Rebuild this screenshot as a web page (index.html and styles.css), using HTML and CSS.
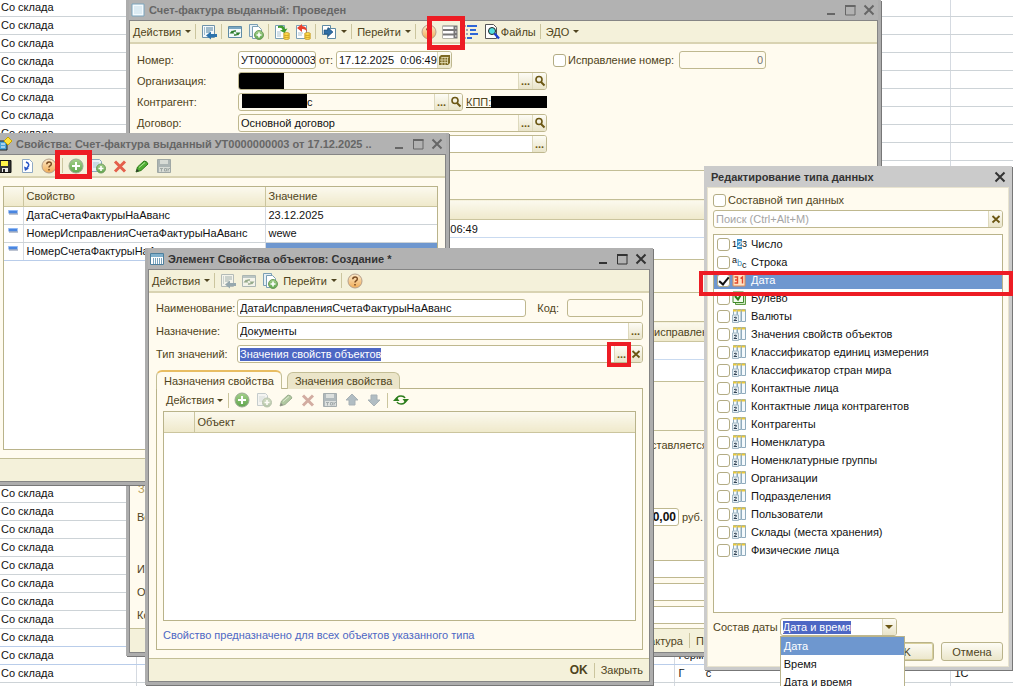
FILE: index.html
```html
<!DOCTYPE html>
<html lang="ru">
<head>
    <meta charset="UTF-8">
    <meta name="viewport" content="width=device-width, initial-scale=1.0">
    <link rel="stylesheet" href="styles.css">
    <title>Счет-фактура выданный</title>
</head>
<body>
    <!-- Набор иконок -->
    <svg class="sprite" aria-hidden="true">
        <linearGradient id="gGreen" x1="0" y1="0" x2="0" y2="1"><stop offset="0" stop-color="#a5d18c"/><stop offset="1" stop-color="#5fa54c"/></linearGradient>
        <linearGradient id="gOrange" x1="0" y1="0" x2="0" y2="1"><stop offset="0" stop-color="#fdebcb"/><stop offset="1" stop-color="#f0ab55"/></linearGradient>
        <symbol id="i-doc" viewBox="0 0 16 16"><path d="M2 2h12v12H2z" fill="#f4fafd" stroke="#7ba4bd"/><path d="M4 5h8M4 7h8M4 9h8M4 11h8" stroke="#c3dbe8"/></symbol>
        <symbol id="i-grid" viewBox="0 0 16 16"><path d="M1.500 2.500h13v11h-13z" fill="#fff" stroke="#4d7f9c"/><path d="M2 3h12v3H2z" fill="#7fb0cc"/><path d="M4.500 7v6M6.500 7v6M8.500 7v6M10.500 7v6M12.500 7v6" stroke="#7ba4bd"/></symbol>
        <symbol id="i-props" viewBox="0 0 16 16"><path d="M2 5h8v9H2z" fill="#4aa3d8" stroke="#222"/><path d="M4 8h4M4 11h4" stroke="#fff"/><path d="M11 1l4 4-4 4-4-4z" fill="#ffe23d" stroke="#c7a400"/></symbol>
        <symbol id="i-close-save" viewBox="0 0 16 16"><path d="M1.500 1.500h12v12h-12z" fill="#f3f8fb" stroke="#6f93aa"/><path d="M3 4h1M5 4h7M3 6h1M5 6h7M3 8h1M5 8h4M3 10h1" stroke="#4d7f9c"/><path d="M5 11.500l5-4v2.500h6v3h-6v2.500z" fill="#2c73ad"/></symbol>
        <symbol id="i-reread" viewBox="0 0 16 16"><path d="M1.500 2.500h13v11h-13z" fill="#f3f8fb" stroke="#5f8ba5"/><path d="M2 3h12v2H2z" fill="#7aa7c2"/><path d="M5 8.500q1-2 4-1.500M11 9.500q-1 2-4 1.500" fill="none" stroke="#2c7d2c" stroke-width="1.500"/><path d="M8.500 8.500h5l-2.500 3zM2.500 9.500h5L5 6.500z" fill="#2c7d2c"/></symbol>
        <symbol id="i-copy" viewBox="0 0 16 16"><path d="M1.500.5h8v12h-8z" fill="#e7f0f5" stroke="#7b9fb5"/><path d="M4.500 2.500h6l3 3v9h-9z" fill="#fff" stroke="#7b9fb5"/><circle cx="11" cy="11" r="4.500" fill="url(#gGreen)" stroke="#6f9c5c"/><path d="M11 8.500v5M8.500 11h5" stroke="#fff" stroke-width="1.600"/></symbol>
        <symbol id="i-post" viewBox="0 0 16 16"><path d="M1.500 1.500h9v13h-9z" fill="#fff" stroke="#7b9fb5"/><path d="M3 8h4M3 10h4M3 12h4" stroke="#a9c3d2"/><path d="M4 2q6-2 7 3l2.500-.5L10.500 9 6 6.500l2.500-.8Q8 3 4 4z" fill="#3f9a2e"/><g fill="#ffd84a" stroke="#b88d17" stroke-width=".7"><ellipse cx="12.500" cy="14" rx="3" ry="1.500"/><ellipse cx="12.500" cy="12" rx="3" ry="1.500"/><ellipse cx="12.500" cy="10" rx="3" ry="1.500"/></g></symbol>
        <symbol id="i-unpost" viewBox="0 0 16 16"><path d="M1.500 1.500h10v13h-10z" fill="#fff" stroke="#7b9fb5"/><path d="M3 9h5M3 11h4" stroke="#a9c3d2"/><path d="M2 4l5-4v2q5 0 5 6-1-3-5-3v3z" fill="#e8402c"/><g fill="#ffd84a" stroke="#b88d17" stroke-width=".7"><ellipse cx="12.500" cy="14" rx="3" ry="1.500"/><ellipse cx="12.500" cy="12" rx="3" ry="1.500"/><ellipse cx="12.500" cy="10" rx="3" ry="1.500"/></g></symbol>
        <symbol id="i-based" viewBox="0 0 16 16"><path d="M1.500 1.500h8v9h-8z" fill="#fff" stroke="#5f8ba5"/><path d="M6.500 4.500h8v10h-8z" fill="#fff" stroke="#5f8ba5"/><path d="M3 6h4V3.500l5 4.500-5 4.500V10H3z" fill="#2f6fa6" stroke="#1d4a73" stroke-width=".6"/></symbol>
        <symbol id="i-help" viewBox="0 0 16 16"><circle cx="8" cy="8" r="7" fill="url(#gOrange)" stroke="#b5a08c"/><path d="M5.800 6.300q0-2.300 2.300-2.300t2.200 2q0 1.200-1.300 1.900-1 .6-1 1.600" fill="none" stroke="#7a4a20" stroke-width="1.500"/><path d="M7.200 11h1.600v1.500H7.200z" fill="#7a4a20"/></symbol>
        <symbol id="i-table" viewBox="0 0 16 16"><path d="M.5 1.500h15v13H.5z" fill="#777"/><path d="M1 2.500h10.500V5H1zM1 7h10.500v2.500H1zM1 11.500h10.500V14H1z" fill="#fff"/><path d="M13 4h1.500M13 8h1.500M13 12h1.500" stroke="#fff"/></symbol>
        <symbol id="i-tree" viewBox="0 0 16 16"><path d="M4 2h10M7 6h6M7 10h8M4 14h5" stroke="#2f66d6" stroke-width="2"/><path d="M1 2h2M3 6h2M3 10h2M1 14h2" stroke="#88a" stroke-width="1.500"/></symbol>
        <symbol id="i-files" viewBox="0 0 16 16"><path d="M1.500.5h8l3 3v11h-11z" fill="#fff" stroke="#555"/><circle cx="8" cy="7" r="3.500" fill="#52e0e0" stroke="#222"/><path d="M10.500 9.500L15 14.500" stroke="#1c3fd0" stroke-width="2.400"/></symbol>
        <symbol id="i-floppy" viewBox="0 0 16 16"><path d="M1.500 2.500h12.500v12H1.500z" fill="#333" stroke="#111"/><path d="M4 3h7v5H4z" fill="#fff44a"/><path d="M5 10h6v4H5z" fill="#e8e8e8"/><path d="M6 11h2v3H6z" fill="#222"/></symbol>
        <symbol id="i-page" viewBox="0 0 16 16"><path d="M3.500 1.500h7l3 3v10h-10z" fill="#fff" stroke="#8fa9c4"/><path d="M7 4q5 2 1 6" fill="none" stroke="#2b57c8" stroke-width="1.500"/><path d="M5 8.500l1 4.500 4-2.500z" fill="#2b57c8"/></symbol>
        <symbol id="i-add" viewBox="0 0 16 16"><circle cx="8" cy="8" r="7" fill="url(#gGreen)" stroke="#9bab94"/><path d="M8 4v8M4 8h8" stroke="#fff" stroke-width="2"/></symbol>
        <symbol id="i-adddoc" viewBox="0 0 16 16"><path d="M1.500 1.500h8l2 2v10h-10z" fill="#e9f1f6" stroke="#8aa9bc"/><path d="M3 5h6M3 7h5M3 9h4" stroke="#a9c3d2"/><circle cx="11" cy="10.500" r="4.500" fill="url(#gGreen)" stroke="#6f9c5c"/><path d="M11 8v5M8.500 10.500h5" stroke="#fff" stroke-width="1.600"/></symbol>
        <symbol id="i-del" viewBox="0 0 16 16"><path d="M3 3.500l10 10M13 3.500l-10 10" stroke="#e4604c" stroke-width="3"/></symbol>
        <symbol id="i-edit" viewBox="0 0 16 16"><path d="M2 14l1.500-5L10 3q3 0 4 3l-7 6.500z" fill="#4fae32" stroke="#2f7a1c"/><path d="M2 14l1-3 2 2z" fill="#333"/><path d="M5 9.500l6-5" stroke="#b7e6a0"/></symbol>
        <symbol id="i-tok" viewBox="0 0 16 16"><path d="M1.500 1.500h13v13h-13z" fill="#5f87a8" stroke="#4f7189"/><path d="M4 2h8v4H4zM3 9h11v5H3z" fill="#b9ccd9"/><path d="M4 10.500h3M5.500 10.500v3M8.500 10.500h2v2.500h-2zM12 10v3.500M14 10l-2 2" stroke="#4f7189" fill="none"/></symbol>
        <symbol id="i-up" viewBox="0 0 16 16"><path d="M8 2l6 6h-3v5H5V8H2z" fill="#5f8fb8" stroke="#51799b"/></symbol>
        <symbol id="i-down" viewBox="0 0 16 16"><path d="M8 14l6-6h-3V3H5v5H2z" fill="#5f8fb8" stroke="#51799b"/></symbol>
        <symbol id="i-refresh" viewBox="0 0 16 16"><path d="M3.500 8q0-4 4.500-4 3 0 4 2M12.500 8q0 4-4.500 4-3 0-4-2" fill="none" stroke="#2c7d1c" stroke-width="1.600"/><path d="M9.500 7H16l-3.500 4zM0 9h6.500L3.500 5z" fill="#2c7d1c"/></symbol>
        <symbol id="i-lens" viewBox="0 0 12 12"><circle cx="5" cy="4.500" r="3" fill="none" stroke="#6b5714" stroke-width="1.600"/><path d="M7 7l3.500 3.500" stroke="#6b5714" stroke-width="2"/></symbol>
        <symbol id="i-cal" viewBox="0 0 12 12"><path d="M3 1h9v8l-2 2H1V3z" fill="#7d6a25"/><path d="M3.500 3.500h7M2 6h8M2 8.500h8M4 3v8M7 3v8M9.500 3v7" stroke="#e6dfb8" stroke-width=".8"/></symbol>
        <symbol id="i-x" viewBox="0 0 12 12"><path d="M2.500 3l7 6.500M9.500 3l-7 6.500" stroke="#6b5714" stroke-width="1.800"/></symbol>
        <symbol id="i-min" viewBox="0 0 12 12"><path d="M2 10h8" stroke="currentColor" stroke-width="2"/></symbol>
        <symbol id="i-max" viewBox="0 0 12 12"><path d="M1.500 1.500h9.500v9.500H1.500z" fill="none" stroke="currentColor"/><path d="M1 2h10.500" stroke="currentColor" stroke-width="2"/></symbol>
        <symbol id="i-close" viewBox="0 0 12 12"><path d="M1.500 1.500l9 9M10.500 1.500l-9 9" stroke="currentColor" stroke-width="2"/></symbol>
        <symbol id="i-row" viewBox="0 0 10 6"><path d="M.5 1h9v3.500h-9z" fill="#4a86e0"/><path d="M1 1.500h8" stroke="#8db7f5"/><path d="M1 5h9" stroke="#7d8aa5"/></symbol>
        <symbol id="i-date" viewBox="0 0 14 14"><path d="M1 1h12v12H1z" fill="#ffe3c4" stroke="#e08b55"/><path d="M2.500 4h3v6h-3M3 7h2.500M8.500 5.500L10.500 4v6.500" fill="none" stroke="#e0482c" stroke-width="1.400"/></symbol>
        <symbol id="i-bool" viewBox="0 0 14 14"><path d="M3.500 3.500h10v10h-10z" fill="#cfe8c2" stroke="#5d9a45"/><path d="M1 1h10.500v10.500H1z" fill="#f4fbef" stroke="#3f8a2a"/><path d="M3 5l3 3.500L10 2" fill="none" stroke="#2c7d1c" stroke-width="2"/></symbol>
        <symbol id="i-ref" viewBox="0 0 14 14"><path d="M1.500.5h3.500v8H1.500zM5.500.5h3.500v12H5.500zM9.500.5h4v12h-4z" fill="#f4f9fc" stroke="#8fabbd"/><path d="M1 1.500h13" stroke="#ecc93a" stroke-width="2" stroke-dasharray="3.500 .8"/><path d="M.5 6h6v7.500h-6z" fill="#e6eef3" stroke="#a3b8c5"/><path d="M2 8.500q3-1 2.500.5L2 11.500h3" fill="none" stroke="#345"/></symbol>
    </svg>

    <main class="desktop">
        <!-- Журнал документов на заднем плане -->
        <table class="journal">
            <colgroup>
                <col class="j1"><col class="j2"><col class="j3"><col class="j4"><col class="j5"><col class="j6"><col class="j7"><col>
            </colgroup>
            <tbody id="journalRows"></tbody>
        </table>

        <!-- Счет-фактура -->
        <section class="window window--invoice">
            <header class="window__title">
                <svg class="icon"><use href="#i-doc"/></svg>
                <h2>Счет-фактура выданный: Проведен</h2>
                <button aria-label="Свернуть"><svg><use href="#i-min"/></svg></button>
                <button aria-label="Развернуть"><svg><use href="#i-max"/></svg></button>
                <button aria-label="Закрыть"><svg><use href="#i-close"/></svg></button>
            </header>
            <div class="window__body">
                <div class="toolbar toolbar--tight">
                    <button class="menu">Действия</button>
                    <i class="sep"></i>
                    <button aria-label="Записать и закрыть"><svg class="icon"><use href="#i-close-save"/></svg></button>
                    <i class="sep"></i>
                    <button aria-label="Перечитать"><svg class="icon"><use href="#i-reread"/></svg></button>
                    <button aria-label="Скопировать"><svg class="icon"><use href="#i-copy"/></svg></button>
                    <i class="sep"></i>
                    <button aria-label="Провести"><svg class="icon"><use href="#i-post"/></svg></button>
                    <button aria-label="Отмена проведения"><svg class="icon"><use href="#i-unpost"/></svg></button>
                    <i class="sep"></i>
                    <button class="menu" aria-label="На основании"><svg class="icon"><use href="#i-based"/></svg></button>
                    <i class="sep"></i>
                    <button class="menu">Перейти</button>
                    <i class="sep"></i>
                    <button aria-label="Справка"><svg class="icon"><use href="#i-help"/></svg></button>
                    <button aria-label="Свойства"><svg class="icon"><use href="#i-table"/></svg></button>
                    <button aria-label="Структура"><svg class="icon"><use href="#i-tree"/></svg></button>
                    <button><svg class="icon"><use href="#i-files"/></svg>Файлы</button>
                    <i class="sep"></i>
                    <button class="menu">ЭДО</button>
                </div>
                <div class="form">
                    <div class="form__row">
                        <label class="form__label" for="num">Номер:</label>
                        <div class="field field--num"><input id="num" value="УТ0000000003"></div>
                        <label for="date">от:</label>
                        <div class="field field--date"><input id="date" value="17.12.2025  0:06:49"><button aria-label="Календарь"><svg><use href="#i-cal"/></svg></button></div>
                        <label class="check check--fix"><input type="checkbox">Исправление номер:</label>
                        <div class="field field--fix field--cream"><input aria-label="Номер исправления" value="0"></div>
                    </div>
                    <div class="form__row">
                        <label class="form__label" for="org">Организация:</label>
                        <div class="field field--long field--cream"><span class="redacted redacted--org"></span><input id="org"><button aria-label="Выбрать">...</button><button aria-label="Открыть"><svg><use href="#i-lens"/></svg></button></div>
                    </div>
                    <div class="form__row">
                        <label class="form__label" for="agent">Контрагент:</label>
                        <div class="field field--agent field--cream"><span class="redacted redacted--agent"></span><input id="agent" value="с"><button aria-label="Выбрать">...</button><button aria-label="Открыть"><svg><use href="#i-lens"/></svg></button></div>
                        <a class="kpp" href="#">КПП:<span class="redacted redacted--kpp"></span></a>
                    </div>
                    <div class="form__row">
                        <label class="form__label" for="contract">Договор:</label>
                        <div class="field field--long field--cream"><input id="contract" value="Основной договор"><button aria-label="Выбрать">...</button><button aria-label="Открыть"><svg><use href="#i-lens"/></svg></button></div>
                    </div>
                    <div class="form__row">
                        <span class="form__label"></span>
                        <div class="field field--long"><input aria-label="Документ"><button aria-label="Выбрать">...</button></div>
                    </div>
                </div>
                <div class="pane pane--base">
                    <table class="grid grid--sheet">
                        <thead><tr><th></th><th></th></tr></thead>
                        <tbody><tr><td></td><td>17.12.2025 0:06:49</td></tr></tbody>
                    </table>
                </div>
                <div class="pane pane--fix">
                    <table class="grid grid--sheet grid--fix">
                        <thead><tr><th></th><th>исправления</th></tr></thead>
                        <tbody><tr><td></td><td></td></tr></tbody>
                    </table>
                </div>
                <div class="pane pane--total">
                    <p class="issued">ставляется</p>
                    <p class="caption">За</p>
                    <div class="form__row">
                        <label class="form__label" for="total">Всего</label>
                        <div class="field field--total"><input id="total" value="0,00"></div>
                        <span>руб.</span>
                    </div>
                </div>
                <div class="signs">
                    <div class="form__row"><label class="form__label" for="s1">Исп</label><div class="field"><input id="s1"></div></div>
                    <div class="form__row"><label class="form__label" for="s2">Отв</label><div class="field"><input id="s2"></div></div>
                    <div class="form__row"><label class="form__label" for="s3">Ком</label><div class="field"><input id="s3"></div></div>
                </div>
                <div class="footer footer--invoice">
                    <button>Счет-фактура</button>
                    <i class="sep"></i>
                    <button>Печать</button>
                </div>
            </div>
        </section>

        <!-- Свойства документа -->
        <section class="window window--props">
            <header class="window__title">
                <svg class="icon"><use href="#i-props"/></svg>
                <h2>Свойства: Счет-фактура выданный УТ0000000003 от 17.12.2025 ..</h2>
                <button aria-label="Свернуть"><svg><use href="#i-min"/></svg></button>
                <button aria-label="Развернуть"><svg><use href="#i-max"/></svg></button>
                <button aria-label="Закрыть"><svg><use href="#i-close"/></svg></button>
            </header>
            <div class="window__body">
                <div class="toolbar toolbar--flush">
                    <button aria-label="Записать"><svg class="icon"><use href="#i-floppy"/></svg></button>
                    <button aria-label="Обновить"><svg class="icon"><use href="#i-page"/></svg></button>
                    <button aria-label="Справка"><svg class="icon"><use href="#i-help"/></svg></button>
                    <i class="sep"></i>
                    <button aria-label="Добавить"><svg class="icon"><use href="#i-add"/></svg></button>
                    <button aria-label="Скопировать"><svg class="icon"><use href="#i-adddoc"/></svg></button>
                    <button aria-label="Удалить"><svg class="icon"><use href="#i-del"/></svg></button>
                    <button aria-label="Изменить"><svg class="icon"><use href="#i-edit"/></svg></button>
                    <button aria-label="Закончить редактирование" disabled><svg class="icon"><use href="#i-tok"/></svg></button>
                </div>
                <div class="grid-box grid-box--props">
                    <table class="grid grid--props">
                        <colgroup><col class="c-mark"><col class="c-name"><col></colgroup>
                        <thead><tr><th></th><th>Свойство</th><th>Значение</th></tr></thead>
                        <tbody>
                            <tr><td><svg><use href="#i-row"/></svg></td><td>ДатаСчетаФактурыНаАванс</td><td>23.12.2025</td></tr>
                            <tr><td><svg><use href="#i-row"/></svg></td><td>НомерИсправленияСчетаФактурыНаАванс</td><td>wewe</td></tr>
                            <tr class="current"><td><svg><use href="#i-row"/></svg></td><td>НомерСчетаФактурыНаАванс</td><td class="selected"></td></tr>
                        </tbody>
                    </table>
                </div>
                <div class="footer"></div>
            </div>
        </section>

        <!-- Создание свойства -->
        <section class="window window--element window--active">
            <header class="window__title">
                <svg class="icon"><use href="#i-grid"/></svg>
                <h2>Элемент Свойства объектов: Создание *</h2>
                <button aria-label="Свернуть"><svg><use href="#i-min"/></svg></button>
                <button aria-label="Развернуть"><svg><use href="#i-max"/></svg></button>
                <button aria-label="Закрыть"><svg><use href="#i-close"/></svg></button>
            </header>
            <div class="window__body">
                <div class="toolbar toolbar--tight">
                    <button class="menu">Действия</button>
                    <i class="sep"></i>
                    <button aria-label="Записать и закрыть" disabled><svg class="icon"><use href="#i-close-save"/></svg></button>
                    <button aria-label="Перечитать" disabled><svg class="icon"><use href="#i-reread"/></svg></button>
                    <button aria-label="Скопировать"><svg class="icon"><use href="#i-copy"/></svg></button>
                    <button class="menu">Перейти</button>
                    <i class="sep"></i>
                    <button aria-label="Справка"><svg class="icon"><use href="#i-help"/></svg></button>
                </div>
                <div class="form form--element">
                    <div class="form__row">
                        <label class="form__label" for="name">Наименование:</label>
                        <div class="field field--grow"><input id="name" value="ДатаИсправленияСчетаФактурыНаАванс"></div>
                        <label class="code" for="code">Код:</label>
                        <div class="field field--code field--cream"><input id="code"></div>
                    </div>
                    <div class="form__row">
                        <label class="form__label" for="target">Назначение:</label>
                        <div class="field field--grow"><input id="target" value="Документы"><button aria-label="Выбрать">...</button></div>
                    </div>
                    <div class="form__row">
                        <label class="form__label" for="type">Тип значений:</label>
                        <div class="field field--grow field--marked"><input id="type" value="Значения свойств объектов"><button aria-label="Выбрать тип">...</button><button aria-label="Очистить"><svg><use href="#i-x"/></svg></button></div>
                    </div>
                </div>
                <div class="tabs" role="tablist">
                    <button class="tab tab--active" role="tab" aria-selected="true">Назначения свойства</button>
                    <button class="tab" role="tab" aria-selected="false">Значения свойства</button>
                </div>
                <div class="tab-panel" role="tabpanel">
                    <div class="toolbar toolbar--plain">
                        <button class="menu">Действия</button>
                        <i class="sep"></i>
                        <button aria-label="Добавить"><svg class="icon"><use href="#i-add"/></svg></button>
                        <button aria-label="Скопировать" disabled><svg class="icon"><use href="#i-adddoc"/></svg></button>
                        <button aria-label="Изменить" disabled><svg class="icon"><use href="#i-edit"/></svg></button>
                        <button aria-label="Удалить" disabled><svg class="icon"><use href="#i-del"/></svg></button>
                        <button aria-label="Закончить редактирование" disabled><svg class="icon"><use href="#i-tok"/></svg></button>
                        <button aria-label="Вверх" disabled><svg class="icon"><use href="#i-up"/></svg></button>
                        <button aria-label="Вниз" disabled><svg class="icon"><use href="#i-down"/></svg></button>
                        <i class="sep"></i>
                        <button aria-label="Обновить"><svg class="icon"><use href="#i-refresh"/></svg></button>
                    </div>
                    <div class="grid-box">
                        <table class="grid grid--objects">
                            <thead><tr><th></th><th>Объект</th></tr></thead>
                        </table>
                    </div>
                    <p class="hint">Свойство предназначено для всех объектов указанного типа</p>
                </div>
                <div class="footer">
                    <button class="bold">OK</button>
                    <i class="sep"></i>
                    <button>Закрыть</button>
                </div>
            </div>
        </section>

        <!-- Выбор типа данных -->
        <section class="window window--types window--active">
            <header class="window__title">
                <h2>Редактирование типа данных</h2>
                <button aria-label="Закрыть"><svg><use href="#i-close"/></svg></button>
            </header>
            <div class="window__body">
                <label class="check"><input type="checkbox">Составной тип данных</label>
                <div class="field field--search"><input placeholder="Поиск (Ctrl+Alt+M)" aria-label="Поиск"><button aria-label="Очистить"><svg><use href="#i-x"/></svg></button></div>
                <ul class="types">
                    <li><label><input type="checkbox"><span class="t-num">1<b>2</b>3</span>Число</label></li>
                    <li><label><input type="checkbox"><span class="t-str"><i>a</i><b>b</b><u>c</u></span>Строка</label></li>
                    <li class="selected"><label><input type="checkbox" checked><svg><use href="#i-date"/></svg>Дата</label></li>
                    <li><label><input type="checkbox"><svg><use href="#i-bool"/></svg>Булево</label></li>
                    <li><label><input type="checkbox"><svg><use href="#i-ref"/></svg>Валюты</label></li>
                    <li><label><input type="checkbox"><svg><use href="#i-ref"/></svg>Значения свойств объектов</label></li>
                    <li><label><input type="checkbox"><svg><use href="#i-ref"/></svg>Классификатор единиц измерения</label></li>
                    <li><label><input type="checkbox"><svg><use href="#i-ref"/></svg>Классификатор стран мира</label></li>
                    <li><label><input type="checkbox"><svg><use href="#i-ref"/></svg>Контактные лица</label></li>
                    <li><label><input type="checkbox"><svg><use href="#i-ref"/></svg>Контактные лица контрагентов</label></li>
                    <li><label><input type="checkbox"><svg><use href="#i-ref"/></svg>Контрагенты</label></li>
                    <li><label><input type="checkbox"><svg><use href="#i-ref"/></svg>Номенклатура</label></li>
                    <li><label><input type="checkbox"><svg><use href="#i-ref"/></svg>Номенклатурные группы</label></li>
                    <li><label><input type="checkbox"><svg><use href="#i-ref"/></svg>Организации</label></li>
                    <li><label><input type="checkbox"><svg><use href="#i-ref"/></svg>Подразделения</label></li>
                    <li><label><input type="checkbox"><svg><use href="#i-ref"/></svg>Пользователи</label></li>
                    <li><label><input type="checkbox"><svg><use href="#i-ref"/></svg>Склады (места хранения)</label></li>
                    <li><label><input type="checkbox"><svg><use href="#i-ref"/></svg>Физические лица</label></li>
                </ul>
                <div class="date-parts">
                    <label for="parts">Состав даты</label>
                    <div class="combo">
                        <div class="field field--marked">
                            <select id="parts"><option>Дата и время</option></select>
                            <span class="combo__arrow"></span>
                        </div>
                        <ul class="combo__list">
                            <li class="selected">Дата</li>
                            <li>Время</li>
                            <li>Дата и время</li>
                        </ul>
                    </div>
                </div>
                <div class="actions">
                    <button class="btn btn--default">OK</button>
                    <button class="btn">Отмена</button>
                </div>
            </div>
        </section>

        <!-- Красные рамки -->
        <div class="mark mark--properties"></div>
        <div class="mark mark--add"></div>
        <div class="mark mark--choose"></div>
        <div class="mark mark--date"></div>
    </main>

    <script>
        const journalRows = document.getElementById('journalRows');
        const extra = {
            36: ['', '', '', '', '', 'Герм', ''],
            37: ['', '', '', '', '', 'Г       с', '1С']
        };

        for (let i = 0; i < 39; i++) {
            const tr = document.createElement('tr');
            const first = i < 38 ? 'Со склада' : '';
            const cells = [first].concat(extra[i] || ['', '', '', '', '', '', '']);
            cells.forEach((text) => {
                const td = document.createElement('td');
                td.textContent = text;
                tr.appendChild(td);
            });
            if (i === 35 || i === 36) {
                tr.className = 'current';
            }
            journalRows.appendChild(tr);
        }
    </script>
</body>
</html>
```
FILE: styles.css
```css
* {
    box-sizing: border-box;
}

body {
    margin: 0;
    background: #fff;
    color: #4f4420;
    font-family: "Liberation Sans", Arial, sans-serif;
    font-size: 11px;
    line-height: 14px;
}

h2, p, ul {
    margin: 0;
    padding: 0;
}

ul {
    list-style: none;
}

button, input, select {
    margin: 0;
    padding: 0;
    border: none;
    background: none;
    color: inherit;
    font: inherit;
}

button {
    cursor: pointer;
}

svg {
    display: block;
    flex: none;
}

.sprite {
    position: absolute;
    width: 0;
    height: 0;
}

.icon {
    width: 16px;
    height: 16px;
}

.desktop {
    position: relative;
    height: 100vh;
    overflow: hidden;
    padding-right: 11px;
}

/* Журнал */
.journal {
    width: 100%;
    margin-top: -2px;
    table-layout: fixed;
    border-collapse: collapse;
    color: #111;
}

.journal td {
    height: 18px;
    padding: 0 0 0 4px;
    border-right: 1px solid #d5dae1;
    border-bottom: 1px solid #cdd3d7;
    white-space: pre;
    overflow: hidden;
}

.journal td:first-child {
    padding-left: 1px;
}

.journal td:last-child {
    border-right: none;
}

.journal .current td {
    border-bottom-color: #b9cdea;
}

.j1 { width: 136px; }
.j2 { width: 76px; }
.j3 { width: 47px; }
.j4 { width: 139px; }
.j5 { width: 138px; }
.j6 { width: 138px; }
.j7 { width: 276px; }

/* Окна */
.window {
    position: absolute;
    display: flex;
    flex-direction: column;
    border: 3px solid #adadad;
    border-top: 0;
    box-shadow: 1px 1px 0 #777;
    background: #fffbef;
}

.window--invoice {
    left: 126px;
    top: 0;
    width: 755px;
    height: 656px;
}

.window--props {
    left: -7px;
    top: 133px;
    width: 456px;
    height: 352px;
}

.window--element {
    left: 145px;
    top: 248px;
    width: 508px;
    height: 437px;
}

.window--types {
    left: 704px;
    top: 166px;
    width: 308px;
    height: 504px;
    border-color: #cbcbcb;
}

.window__title {
    display: flex;
    align-items: center;
    height: 21px;
    padding-left: 1px;
    background: #b2b2b2;
    color: #666;
}

.window--invoice .window__title {
    height: 20px;
}

.window__title h2 {
    flex: 1;
    padding-left: 3px;
    font-size: 11px;
    white-space: nowrap;
}

.window__title button {
    width: 19px;
}

.window__title button svg {
    width: 12px;
    height: 12px;
    margin: 0 auto;
}

.window--active .window__title {
    color: #333;
}

.window--types .window__title {
    background: #cbcbcb;
}

.window__body {
    flex: 1;
    display: flex;
    flex-direction: column;
    min-height: 0;
    border: 1px solid #858585;
}

.window--types .window__body {
    padding: 5px;
    border-color: #e8e3cf;
}

/* Панели инструментов */
.toolbar {
    display: flex;
    align-items: center;
    gap: 6px;
    height: 23px;
    padding: 0 3px;
    background: #f4f1da;
    border-bottom: 2px solid #d9d3b2;
}

.toolbar--tight {
    gap: 5px;
}

.toolbar--flush {
    padding: 0;
}

.toolbar--plain {
    height: 22px;
    background: none;
    border: none;
}

.toolbar button {
    display: flex;
    align-items: center;
    gap: 1px;
}

.toolbar button:disabled {
    filter: grayscale(50%);
    opacity: 0.55;
}

.menu::after {
    content: "";
    margin-left: 2px;
    border: 3px solid transparent;
    border-top-color: #4f4420;
    border-bottom: 0;
}

.toolbar--tight .menu::after {
    margin-left: 3px;
}

.sep {
    width: 1px;
    height: 15px;
    background: #cbc59e;
}

.toolbar .sep {
    margin: 0 -1px;
}

.toolbar--tight .sep {
    margin-right: 0;
}

/* Поля */
.form {
    display: flex;
    flex-direction: column;
    gap: 3px;
    padding: 7px 7px 0;
}

.form__row {
    display: flex;
    align-items: center;
    gap: 3px;
    height: 18px;
}

.form__label {
    width: 98px;
    flex: none;
}

.field {
    display: flex;
    align-items: stretch;
    height: 18px;
    border: 1px solid #bfb88f;
    border-radius: 3px;
    background: #fff;
    color: #111;
    overflow: hidden;
}

.field input {
    flex: 1;
    min-width: 0;
    padding: 0 2px;
    outline: none;
}

.field button {
    width: 14px;
    flex: none;
    display: flex;
    align-items: center;
    justify-content: center;
    border-left: 1px solid #ded9bd;
    background: linear-gradient(#fdfcf5, #e9e4c9);
    color: #6b5714;
    font-weight: bold;
}

.field button svg {
    width: 12px;
    height: 12px;
}

.field--cream {
    background: #fffbef;
}

.field--num { width: 78px; }
.field--date { width: 116px; }
.field--date input { white-space: pre; }
.field--fix { width: 87px; margin-left: 2px; }
.field--long { width: 309px; }
.field--agent { width: 225px; padding-left: 3px; }
.field--agent input { padding: 0; }
.field--grow { flex: 1; }
.field--code { width: 76px; }
.field--total { width: 441px; font-size: 12px; font-weight: bold; }

.field--num input, .field--date input {
    padding-right: 0;
}

.field--fix input, .field--total input {
    text-align: right;
    color: #777;
}

.field--total input {
    color: #111;
}

.field--marked {
    align-items: center;
    padding-left: 2px;
}

.field--marked input, .field--marked select {
    flex: none;
    field-sizing: content;
    margin-right: auto;
    padding: 0;
    background: #4d67c4;
    color: #fff;
    line-height: 13px;
    appearance: none;
}

.field--marked button {
    align-self: stretch;
}

.check {
    display: flex;
    align-items: center;
    gap: 2px;
}

.check--fix {
    margin-left: 98px;
}

input[type="checkbox"] {
    width: 13px;
    height: 13px;
    flex: none;
    appearance: none;
    border: 1px solid #b3ac84;
    border-radius: 3px;
    background: #fff;
}

input[type="checkbox"]:checked::after {
    content: "";
    display: block;
    width: 4px;
    height: 8px;
    margin: 0 auto;
    border: solid #111;
    border-width: 0 2px 2px 0;
    transform: rotate(40deg);
}

.redacted {
    background: #000;
    flex: none;
}

.redacted--org { width: 45px; }
.redacted--agent { width: 65px; height: 14px; }

.redacted--kpp {
    width: 56px;
    height: 12px;
}

.kpp {
    display: flex;
    align-items: center;
    color: inherit;
}

/* Таблицы */
.grid {
    width: 100%;
    table-layout: fixed;
    border-collapse: collapse;
    color: #111;
}

.grid th {
    height: 20px;
    padding: 0 3px;
    border-bottom: 1px solid #cbc59e;
    border-right: 1px solid #cbc59e;
    background: linear-gradient(#fbf9ee, #efe9cb);
    color: #4f4420;
    font-weight: normal;
    text-align: left;
}

.grid td {
    height: 18px;
    padding: 0 3px;
    border-right: 1px solid #d5dae1;
    border-bottom: 1px solid #cdd3d7;
    white-space: nowrap;
    overflow: hidden;
}

.grid tr > :last-child {
    border-right: none;
}

.grid td svg {
    width: 10px;
    height: 6px;
    margin: -6px auto 0;
}

.grid .current td {
    border-bottom-color: #b9cdea;
}

.selected, .grid td.selected {
    background: #6e97cf;
    color: #fff;
}

.grid-box {
    flex: 1;
    border: 1px solid #b9b38a;
    background: #fff;
}

.grid-box--props {
    margin: 8px 7px 8px 6px;
}

.c-mark { width: 19px; }
.c-name { width: 242px; }

.grid--props th {
    height: 19px;
}

.grid--objects th:first-child {
    width: 30px;
}

/* Нижняя часть счета-фактуры */
.pane {
    padding-top: 28px;
    border-top: 1px solid #c3be96;
}

.pane--base {
    margin-top: 17px;
    height: 122px;
}

.pane--fix {
    height: 138px;
}

.grid--sheet {
    height: 60px;
    background: #fff;
    border-top: 1px solid #c3be96;
    border-bottom: 1px solid #c3be96;
}

.grid--sheet::after {
    content: "";
    display: block;
    height: 21px;
}

.grid--sheet th:first-child {
    width: 250px;
}

.grid--sheet th, .grid--sheet td {
    border-right: none;
}

.grid--sheet td {
    border-bottom-color: #c9daf0;
}

.grid--fix th:first-child {
    width: 521px;
}

.pane--total {
    height: 130px;
    padding: 7px 7px 0;
}

.issued {
    padding-left: 514px;
}

.caption {
    padding: 30px 0 12px 1px;
    color: #b39a55;
}

.signs {
    display: flex;
    flex-direction: column;
    gap: 5px;
    padding: 0 7px 4px;
}

.signs .field {
    flex: 1;
}

.footer {
    display: flex;
    align-items: center;
    justify-content: flex-end;
    gap: 6px;
    height: 23px;
    padding: 0 6px;
    background: #f4f1da;
    border-top: 1px solid #c3be96;
}

.footer--invoice {
    flex: 1;
    padding-right: 145px;
}

.bold {
    font-size: 12px;
    font-weight: bold;
}

/* Форма свойства */
.form--element {
    gap: 5px;
    padding: 6px 6px 7px 7px;
}

.form--element .form__label {
    width: 78px;
}

.code {
    padding: 0 5px 0 8px;
}

.tabs {
    display: flex;
    align-items: flex-end;
    gap: 5px;
    margin: 0 6px -1px 7px;
}

.tab {
    z-index: 1;
    height: 17px;
    padding: 0 7px;
    border: 1px solid #c3be96;
    border-bottom: none;
    border-radius: 6px 6px 0 0;
    background: #ebe5c9;
}

.tab--active {
    height: 19px;
    border-top: 2px solid #e8bd63;
    background: #fffbef;
}

.tab-panel {
    flex: 1;
    display: flex;
    flex-direction: column;
    margin: 0 6px 8px 7px;
    padding: 0 6px;
    border: 1px solid #b9b38a;
}

.hint {
    padding: 7px 0;
    color: #4d67c4;
}

/* Редактор типа */
.field--search {
    flex: none;
    margin-top: 3px;
}

.field--search input::placeholder {
    color: #a5a5a5;
}

.types {
    flex: 1;
    margin: 6px 0 5px;
    border: 1px solid #b9b38a;
    background: #fff;
    color: #111;
}

.types li {
    height: 18px;
}

.types li.selected {
    color: #fff;
}

.types label {
    display: flex;
    align-items: center;
    gap: 2px;
    height: 18px;
    padding-left: 3px;
}

.types svg {
    width: 14px;
    height: 14px;
    margin-right: 3px;
}

.t-num, .t-str {
    width: 15px;
    margin-right: 2px;
    display: flex;
    font-size: 9px;
    line-height: 10px;
}

.t-num b {
    background: #3f8fc4;
    color: #fff;
    font-weight: normal;
}

.t-str i {
    font-style: normal;
}

.t-str b {
    padding-top: 3px;
    color: #3f8fc4;
    font-weight: normal;
}

.t-str u {
    padding-top: 5px;
    text-decoration: none;
}

.date-parts {
    display: flex;
    align-items: center;
    gap: 2px;
}

.combo {
    position: relative;
}

.combo .field {
    width: 117px;
}

.combo__arrow {
    width: 14px;
    align-self: stretch;
    display: flex;
    align-items: center;
    justify-content: center;
    border-left: 1px solid #ded9bd;
    background: linear-gradient(#fdfcf5, #e9e4c9);
}

.combo__arrow::after {
    content: "";
    border: 4px solid transparent;
    border-top-color: #6b5714;
    border-bottom: 0;
}

.combo__list {
    position: absolute;
    z-index: 2;
    top: 100%;
    left: 0;
    width: 125px;
    border: 1px solid #b9b38a;
    background: #fff;
    color: #111;
}

.combo__list li {
    height: 18px;
    padding: 2px 3px;
}

.combo__list .selected {
    color: #fff;
}

.actions {
    display: flex;
    justify-content: flex-end;
    gap: 7px;
    margin-top: 6px;
}

.btn {
    width: 62px;
    height: 19px;
    border: 1px solid #b9b38a;
    border-radius: 3px;
    background: linear-gradient(#fdfcf5, #ebe6cb);
}

.btn--default {
    box-shadow: inset 0 0 0 1px #d9d09c;
}

/* Выделение красным */
.mark {
    position: absolute;
    border: 5px solid #ed1c24;
    pointer-events: none;
}

.mark--properties {
    left: 427px;
    top: 16px;
    width: 38px;
    height: 34px;
}

.mark--add {
    left: 55px;
    top: 150px;
    width: 37px;
    height: 29px;
}

.mark--choose {
    left: 607px;
    top: 342px;
    width: 24px;
    height: 25px;
    border-width: 4px;
}

.mark--date {
    left: 699px;
    top: 271px;
    width: 314px;
    height: 25px;
    border-width: 4px;
}
```
